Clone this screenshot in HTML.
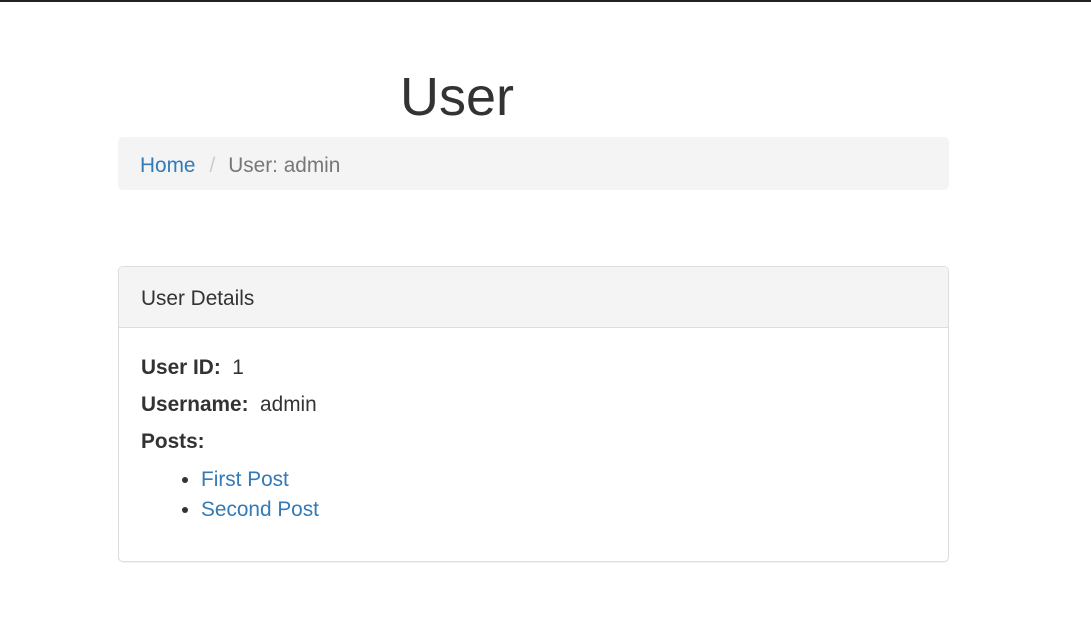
<!DOCTYPE html>
<html><head><style>
*{box-sizing:border-box}
body{margin:0;width:1091px;height:638px;background:#fff;font-family:"Liberation Sans",sans-serif;color:#333;position:relative;overflow:hidden}
.top{position:absolute;left:0;top:0;width:1091px;height:2px;background:#222}
h1{position:absolute;left:400px;top:64px;margin:0;font-size:54px;font-weight:400;line-height:66px;color:#333}
.bc{position:absolute;left:118px;top:137px;width:831px;height:53px;background:#f4f4f4;border-radius:5px;font-size:20.8px;line-height:53px;padding:2px 0 0 22px;color:#777}
.bc a{color:#337ab7;text-decoration:none}
.bc .s{color:#ccc;padding:0 13px 0 14px}
.p{position:absolute;left:118px;top:266px;width:831px;height:296px;border:1px solid #ddd;border-radius:5px;box-shadow:0 1px 1px rgba(0,0,0,.05)}
.ph{height:61px;background:#f4f4f4;border-bottom:1px solid #ddd;font-size:20.8px;line-height:60px;padding:2px 0 0 22px;border-radius:5px 5px 0 0}
.pb{padding:21px 22px;font-size:20.8px}
.pb p{margin:0;line-height:37px}
ul{margin:5px 0 0;padding-left:60px;line-height:30px}
li a{color:#337ab7;text-decoration:none}
</style></head><body>
<div class="top"></div>
<h1>User</h1>
<div class="bc"><a>Home</a><span class="s">/</span>User: admin</div>
<div class="p"><div class="ph">User Details</div>
<div class="pb"><p><b>User ID:</b>&nbsp; 1</p><p><b>Username:</b>&nbsp; admin</p><p><b>Posts:</b></p>
<ul><li><a>First Post</a></li><li><a>Second Post</a></li></ul></div></div>
</body></html>
